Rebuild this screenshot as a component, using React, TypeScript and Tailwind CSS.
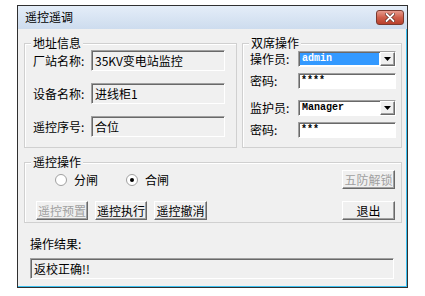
import React from "react";

const sunken =
  "border-t border-l border-t-[#a0a0a0] border-l-[#a0a0a0] border-b border-r border-b-white border-r-white shadow-[inset_1px_1px_0_#696969]";

const raised =
  "border border-t-white border-l-white border-b-[#696969] border-r-[#696969] shadow-[inset_-1px_-1px_0_#a0a0a0] bg-[#f0f0f0]";

function Legend({ text }: { text: string }) {
  return (
    <span className="-mt-[8px] ml-[6px] self-start bg-[#f0f0f0] px-[2px] h-[14px] leading-[14px] whitespace-nowrap">
      {text}
    </span>
  );
}

function Field({ label, value }: { label: string; value: string }) {
  return (
    <div className="flex items-center">
      <span className="w-[58px] shrink-0 whitespace-nowrap">{label}</span>
      <div className={`${sunken} shrink-0 w-[134px] h-[21px] bg-[#f0f0f0] pl-[3px] leading-[19px] whitespace-nowrap`}>
        {value}
      </div>
    </div>
  );
}

function Combo({ label, value, selected }: { label: string; value: string; selected?: boolean }) {
  return (
    <div className="flex items-center h-[16px]">
      <span className="w-[48px] shrink-0 whitespace-nowrap">{label}</span>
      <div className={`${sunken} shrink-0 flex w-[98px] h-[16px] bg-white`}>
        <div
          className={`flex-1 m-[1px] pl-[2px] text-[10px] leading-[12px] font-bold ${
            selected ? "bg-[#3399ff] text-white" : "text-black"
          }`}
          style={{ fontFamily: '"Liberation Mono", monospace' }}
        >
          {value}
        </div>
        <div className={`${raised} w-[15px] flex items-center justify-center`}>
          <svg width="7" height="4" viewBox="0 0 7 4">
            <path d="M0 0h7L3.5 4z" fill="#000" />
          </svg>
        </div>
      </div>
    </div>
  );
}

function Password({ value }: { value: string }) {
  return (
    <div className="flex items-center h-[16px]">
      <span className="w-[48px] shrink-0 whitespace-nowrap">密码:</span>
      <div
        className={`${sunken} shrink-0 w-[98px] h-[16px] bg-white pl-[2px] text-[10px] leading-[14px] font-bold`}
        style={{ fontFamily: '"Liberation Mono", monospace' }}
      >
        {value}
      </div>
    </div>
  );
}

function Btn({ text, disabled, w = "w-[52px]" }: { text: string; disabled?: boolean; w?: string }) {
  return (
    <div
      className={`${raised} ${w} shrink-0 h-[19px] flex items-center justify-center whitespace-nowrap ${
        disabled ? "text-[#a0a0a0]" : "text-black"
      }`}
    >
      {text}
    </div>
  );
}

function Radio({ text, checked }: { text: string; checked?: boolean }) {
  return (
    <div className="flex items-center gap-[7px]">
      <div className="w-[12px] h-[12px] rounded-full border border-[#a0a0a0] bg-white flex items-center justify-center">
        {checked && <div className="w-[4px] h-[4px] rounded-full bg-black" />}
      </div>
      <span>{text}</span>
    </div>
  );
}

export default function App() {
  return (
    <div
      className="w-[425px] h-[296px] bg-white pt-[5px] pl-[17px] text-[12px] text-black"
      style={{ fontFamily: '"Noto Sans CJK SC", "Liberation Sans", sans-serif' }}
    >
      <div className="w-[391px] h-[283px] border border-[#303030] bg-[#f0f0f0] shadow-[inset_-1px_-1px_0_#3cc0f0] flex flex-col">
        {/* title bar */}
        <div className="h-[23px] bg-gradient-to-b from-[#e4edf8] to-[#cddcee] flex justify-between">
          <span className="pl-[7px] pt-[4px] leading-[14px]">遥控遥调</span>
          <div className="mt-[4px] mr-[3px] w-[28px] h-[15px] rounded-[3px] border border-[#7a3a30] bg-gradient-to-b from-[#e69a8c] via-[#cf5f4b] to-[#b8402c] flex items-center justify-center">
            <svg width="10" height="9" viewBox="0 0 10 9">
              <path d="M1.5 1L8.5 8M8.5 1L1.5 8" stroke="#5a2a22" strokeWidth="3.2" strokeLinecap="round" />
              <path d="M1.5 1L8.5 8M8.5 1L1.5 8" stroke="#fff" strokeWidth="1.8" strokeLinecap="round" />
            </svg>
          </div>
        </div>

        <div className="flex flex-col pl-[6px] pr-[5px]">
          {/* top groups */}
          <div className="flex gap-[5px] mt-[14px]">
            <div className="w-[213px] h-[105px] border border-[#d0d0d0] shadow-[inset_1px_1px_0_white] flex flex-col">
              <Legend text="地址信息" />
              <div className="flex flex-col gap-[12px] pl-[8px]">
                <Field label="厂站名称:" value="35KV变电站监控" />
                <Field label="设备名称:" value="进线柜1" />
                <Field label="遥控序号:" value="合位" />
              </div>
            </div>
            <div className="w-[160px] h-[105px] border border-[#d0d0d0] shadow-[inset_1px_1px_0_white] flex flex-col">
              <Legend text="双席操作" />
              <div className="flex flex-col pl-[7px] mt-[1px]">
                <Combo label="操作员:" value="admin" selected />
                <div className="mt-[6px]">
                  <Password value="****" />
                </div>
                <div className="mt-[11px]">
                  <Combo label="监护员:" value="Manager" />
                </div>
                <div className="mt-[6px]">
                  <Password value="***" />
                </div>
              </div>
            </div>
          </div>

          {/* remote control group */}
          <div className="mt-[14px] h-[61px] border border-[#d0d0d0] shadow-[inset_1px_1px_0_white] flex flex-col">
            <Legend text="遥控操作" />
            <div className="flex items-center justify-between mt-[1px] pr-[6px]">
              <div className="flex gap-[28px] pl-[30px]">
                <Radio text="分闸" />
                <Radio text="合闸" checked />
              </div>
              <Btn text="五防解锁" disabled w="w-[53px]" />
            </div>
            <div className="flex items-center justify-between mt-[12px] pl-[11px] pr-[6px]">
              <div className="flex gap-[7px]">
                <Btn text="遥控预置" disabled />
                <Btn text="遥控执行" />
                <Btn text="遥控撤消" w="w-[53px]" />
              </div>
              <Btn text="退出" w="w-[53px]" />
            </div>
          </div>

          {/* result */}
          <div className="pl-[6px] pr-[8px]">
            <div className="mt-[14px] leading-[14px]">操作结果:</div>
            <div className={`${sunken} mt-[7px] h-[21px] bg-[#f0f0f0] pl-[3px] leading-[19px]`}>返校正确!!</div>
          </div>
        </div>
      </div>
    </div>
  );
}
